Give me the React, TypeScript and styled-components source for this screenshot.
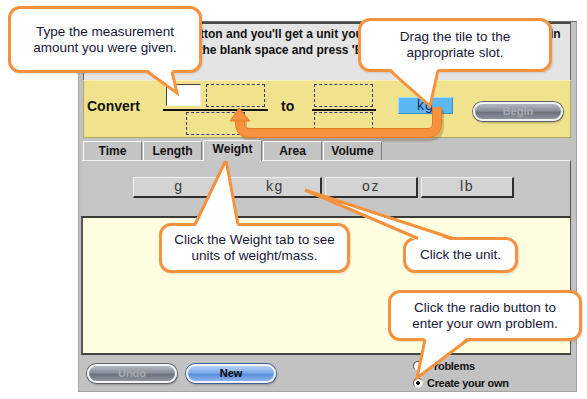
import React from "react";
import styled, { createGlobalStyle } from "styled-components";

const ORANGE = "#f6923d";

const GlobalStyle = createGlobalStyle`
  html, body {
    margin: 0;
    padding: 0;
    background: #ffffff;
  }
  body {
    font-family: "Liberation Sans", Arial, sans-serif;
  }
  * {
    box-sizing: border-box;
  }
`;

type Pt = [number, number];

export default function App() {
  return (
    <>
      <GlobalStyle />
      <Page>
        <Frame>
          <Instructions>
            Click on the New button and you'll get a unit you need to convert. Type a number in
            <br />
            Type the amount in the blank space and press 'Begin'.
          </Instructions>

          <ConvertBar>
            <ConvertLabel>Convert</ConvertLabel>
            <Fraction $w={105}>
              <FracTop $pad={3}>
                <NumberInput />
                <Slot />
              </FracTop>
              <FracLine />
              <FracBottom $pad={23}>
                <Slot />
              </FracBottom>
            </Fraction>
            <ToLabel>to</ToLabel>
            <Fraction $w={64}>
              <FracTop $pad={2}>
                <Slot />
              </FracTop>
              <FracLine />
              <FracBottom $pad={2}>
                <Slot />
              </FracBottom>
            </Fraction>
            <UnitTile>kg</UnitTile>
            <Pill $tone="gray" $left={20} $top={21}>
              Begin
            </Pill>
          </ConvertBar>

          <TabRow>
            {["Time", "Length", "Weight", "Area", "Volume"].map((t) => (
              <Tab key={t} $active={t === "Weight"}>
                {t}
              </Tab>
            ))}
          </TabRow>

          <UnitPanel>
            {["g", "kg", "oz", "lb"].map((u) => (
              <UnitButton key={u}>{u}</UnitButton>
            ))}
          </UnitPanel>

          <WorkArea />

          <BottomBar>
            <Pill $tone="gray" $left={0} $top={0}>
              Undo
            </Pill>
            <Pill $tone="blue" $left={9} $top={0}>
              New
            </Pill>
            <RadioGroup>
              <RadioRow>
                <Radio />
                Problems
              </RadioRow>
              <RadioRow>
                <Radio $checked />
                Create your own
              </RadioRow>
            </RadioGroup>
          </BottomBar>
        </Frame>

        <Callout x={8} y={6} w={194} h={67} side="bottom" b1={139} b2={164} tip={[169, 87]}>
          Type the measurement
          <br />
          amount you were given.
        </Callout>
        <Callout x={358} y={18} w={194} h={54} side="bottom" b1={32} b2={80} tip={[72, 88]}>
          Drag the tile to the
          <br />
          appropriate slot.
        </Callout>
        <Callout x={159} y={223} w={191} h={50} side="top" b1={36} b2={79} tip={[67, -63]}>
          Click the Weight tab to see
          <br />
          units of weight/mass.
        </Callout>
        <Callout x={403} y={237} w={115} h={36} side="top" b1={15} b2={50} tip={[-98, -47]}>
          Click the unit.
        </Callout>
        <Callout x={388} y={290} w={194} h={51} side="bottom" b1={37} b2={80} tip={[29, 88]}>
          Click the radio button to
          <br />
          enter your own problem.
        </Callout>

        <DragArrow width={587} height={399} viewBox="0 0 587 399">
          <path
            d="M438 108 V124 Q438 135 427 135 H252 Q241 135 241 124 V119"
            fill="none"
            stroke="rgba(90,60,20,0.25)"
            strokeWidth={9}
            transform="translate(1.5 2)"
          />
          <path
            d="M437 107 V123 Q437 133 427 133 H250 Q240 133 240 123 V119"
            fill="none"
            stroke="#e37d22"
            strokeWidth={10}
          />
          <path
            d="M437 107 V123 Q437 133 427 133 H250 Q240 133 240 123 V119"
            fill="none"
            stroke={ORANGE}
            strokeWidth={8}
          />
          <polygon points="230,121 250,121 239,108" fill={ORANGE} stroke="#e37d22" strokeWidth={1} />
        </DragArrow>
      </Page>
    </>
  );
}

function Callout({
  x,
  y,
  w,
  h,
  side,
  b1,
  b2,
  tip,
  children,
}: {
  x: number;
  y: number;
  w: number;
  h: number;
  side: "top" | "bottom";
  b1: number;
  b2: number;
  tip: Pt;
  children: React.ReactNode;
}) {
  const edge = side === "bottom" ? h - 1.5 : 1.5;
  const inner = side === "bottom" ? h - 4 : 4;
  return (
    <Bubble $x={x} $y={y} $w={w} $h={h}>
      <Tail width={w} height={h}>
        <polygon points={`${b1},${inner} ${tip[0]},${tip[1]} ${b2},${inner}`} fill="#fff" />
        <polyline
          points={`${b1},${edge} ${tip[0]},${tip[1]} ${b2},${edge}`}
          fill="none"
          stroke={ORANGE}
          strokeWidth={3}
          strokeLinejoin="miter"
        />
      </Tail>
      <BubbleText>{children}</BubbleText>
    </Bubble>
  );
}

const Page = styled.div`
  position: relative;
  width: 587px;
  height: 399px;
  overflow: hidden;
  padding: 21px 0 0 78px;
`;

const Frame = styled.div`
  width: 499px;
  height: 371px;
  border: 1px solid #a4a4a4;
  border-top-color: #6a6a6a;
  background: #c2c2c2;
  padding: 0 5px 0 2px;
  display: flex;
  flex-direction: column;
`;

const Instructions = styled.div`
  height: 58px;
  margin-left: 2px;
  background: #e4e4e4;
  border-top: 2px solid #4a4a4a;
  border-left: 1px solid #6a6a6a;
  border-right: 1px solid #6a6a6a;
  padding: 2px 0 0 2px;
  font-size: 12px;
  font-weight: bold;
  line-height: 16px;
  color: #111;
  white-space: nowrap;
`;

const ConvertBar = styled.div`
  height: 58px;
  margin-left: 2px;
  background: #f1e38d;
  border: 1px solid #b3a862;
  border-top-color: #fbf3bb;
  display: flex;
  align-items: flex-start;
`;

const ConvertLabel = styled.div`
  width: 79px;
  padding-left: 3px;
  margin-top: 17px;
  font-size: 14px;
  font-weight: bold;
  line-height: 16px;
  color: #111;
`;

const Fraction = styled.div<{ $w: number }>`
  width: ${(p) => p.$w}px;
  margin-top: 3px;
  display: flex;
  flex-direction: column;
`;

const FracTop = styled.div<{ $pad: number }>`
  display: flex;
  gap: 5px;
  height: 23px;
  padding-left: ${(p) => p.$pad}px;
  align-items: flex-start;
`;

const FracLine = styled.div`
  height: 2px;
  margin-top: 2px;
  background: #111;
`;

const FracBottom = styled.div<{ $pad: number }>`
  padding-left: ${(p) => p.$pad}px;
  margin-top: 1px;
`;

const NumberInput = styled.div`
  width: 35px;
  height: 22px;
  background: #ffffff;
  border: 1px solid #ededed;
  border-top-color: #404040;
  border-left-color: #404040;
`;

const Slot = styled.div`
  width: 59px;
  height: 23px;
  border: 1px dashed #3b3b86;
`;

const ToLabel = styled.div`
  width: 44px;
  padding-left: 13px;
  margin-top: 17px;
  font-size: 14px;
  font-weight: bold;
  line-height: 16px;
  color: #111;
`;

const UnitTile = styled.div`
  width: 55px;
  height: 17px;
  margin: 16px 0 0 22px;
  background: #5cb8f2;
  border: 1px solid #a6d8f7;
  border-right-color: #3e8fc6;
  border-bottom-color: #3e8fc6;
  text-align: center;
  font-size: 14px;
  line-height: 14px;
  letter-spacing: 1px;
  color: #1c2c5c;
`;

const Pill = styled.div<{ $tone: "gray" | "blue"; $left: number; $top: number }>`
  width: 90px;
  height: 19px;
  margin: ${(p) => p.$top}px 0 0 ${(p) => p.$left}px;
  border-radius: 10px;
  border: 2px solid #f2f3f5;
  box-shadow: 0 0 0 1px ${(p) => (p.$tone === "blue" ? "#3d5f9a" : "#5e646d")},
    1px 2px 2px rgba(0, 0, 0, 0.25);
  background: ${(p) =>
    p.$tone === "blue"
      ? "linear-gradient(#b5d2f7, #7aa7ea 48%, #5a8ddc 55%, #8ab4ef)"
      : "linear-gradient(#b4bac2, #858c97 48%, #6c727d 55%, #8f959f)"};
  color: ${(p) => (p.$tone === "blue" ? "#000" : "#a9adb4")};
  font-size: 11px;
  font-weight: bold;
  line-height: 15px;
  text-align: center;
`;

const TabRow = styled.div`
  height: 20px;
  margin-top: 2px;
  padding-left: 2px;
  display: flex;
  align-items: flex-end;
  gap: 1px;
`;

const Tab = styled.div<{ $active?: boolean }>`
  width: 59px;
  height: ${(p) => (p.$active ? 21 : 19)}px;
  margin-bottom: ${(p) => (p.$active ? -1 : 0)}px;
  background: ${(p) => (p.$active ? "#c8c8c8" : "#c4c4c4")};
  border-top: 1px solid #fafafa;
  border-left: 1px solid #fafafa;
  border-right: 1px solid #7c7c7c;
  text-align: center;
  font-size: 12px;
  font-weight: bold;
  line-height: ${(p) => (p.$active ? 17 : 18)}px;
  color: #111;
  position: relative;
  z-index: 1;
`;

const UnitPanel = styled.div`
  height: 56px;
  margin-left: 1px;
  background: #c6c6c6;
  border-top: 1px solid #f4f4f4;
  border-right: 1px solid #555;
  padding: 16px 0 0 51px;
  display: flex;
  gap: 3px;
  align-items: flex-start;
`;

const UnitButton = styled.div`
  width: 93px;
  height: 21px;
  background: #d3d3d3;
  border-top: 1px solid #f2f2f2;
  border-left: 1px solid #f2f2f2;
  border-right: 2px solid #2e2e2e;
  border-bottom: 2px solid #2e2e2e;
  text-align: center;
  font-size: 14px;
  line-height: 17px;
  letter-spacing: 1.5px;
  color: #3a3a3a;
`;

const WorkArea = styled.div`
  height: 139px;
  background: #fffee1;
  border-top: 2px solid #3a3a3a;
  border-left: 2px solid #555;
  border-right: 1px solid #555;
  border-bottom: 2px solid #444;
`;

const BottomBar = styled.div`
  height: 36px;
  padding: 9px 0 0 6px;
  display: flex;
  align-items: flex-start;
`;

const RadioGroup = styled.div`
  margin: -7px 0 0 137px;
  display: flex;
  flex-direction: column;
`;

const RadioRow = styled.div`
  display: flex;
  align-items: center;
  gap: 4px;
  height: 17px;
  font-size: 11px;
  font-weight: bold;
  letter-spacing: -0.3px;
  color: #111;
`;

const Radio = styled.span<{ $checked?: boolean }>`
  width: 10px;
  height: 10px;
  border-radius: 50%;
  border: 1px solid #555;
  border-bottom-color: #ddd;
  border-right-color: #ddd;
  background: ${(p) =>
    p.$checked ? "radial-gradient(circle, #111 0 1.6px, #fff 2px)" : "#fff"};
`;

const Bubble = styled.div<{ $x: number; $y: number; $w: number; $h: number }>`
  position: absolute;
  left: ${(p) => p.$x}px;
  top: ${(p) => p.$y}px;
  width: ${(p) => p.$w}px;
  height: ${(p) => p.$h}px;
  background: #ffffff;
  border: 3px solid ${ORANGE};
  border-radius: 12px;
  box-shadow: 1px 1px 2px rgba(0, 0, 0, 0.12);
  display: flex;
  align-items: center;
  justify-content: center;
`;

const Tail = styled.svg`
  position: absolute;
  left: -3px;
  top: -3px;
  overflow: visible;
  pointer-events: none;
`;

const BubbleText = styled.div`
  position: relative;
  text-align: center;
  font-size: 13.5px;
  line-height: 16px;
  color: #17173a;
  white-space: nowrap;
`;

const DragArrow = styled.svg`
  position: absolute;
  left: 0;
  top: 0;
  pointer-events: none;
`;
